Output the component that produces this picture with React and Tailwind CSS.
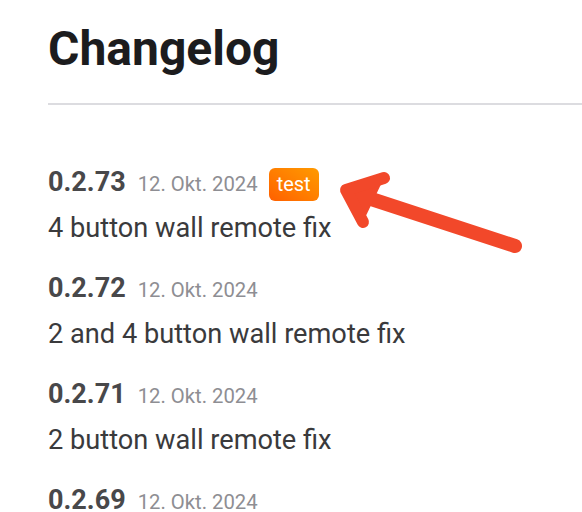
import React from 'react'

const ENTRIES = [
  { version: '0.2.73', date: '12. Okt. 2024', tag: 'test', text: '4 button wall remote fix' },
  { version: '0.2.72', date: '12. Okt. 2024', text: '2 and 4 button wall remote fix' },
  { version: '0.2.71', date: '12. Okt. 2024', text: '2 button wall remote fix' },
  { version: '0.2.69', date: '12. Okt. 2024' },
]

const Arrow = () => (
  <svg
    className="absolute left-0 top-0 pointer-events-none"
    width="582"
    height="512"
    viewBox="0 0 582 512"
  >
    <path
      d="M515 246 L356 194"
      stroke="#f2482a"
      strokeWidth="14"
      strokeLinecap="round"
      fill="none"
    />
    <path
      d="M384 178 L346 190 L363 222"
      stroke="#f2482a"
      strokeWidth="12"
      strokeLinecap="round"
      strokeLinejoin="round"
      fill="#f2482a"
    />
  </svg>
)

const App = () => {
  return (
    <div className="relative w-[582px] h-[512px] overflow-hidden bg-white font-['Roboto',sans-serif]">
      <div className="pl-12 pt-[21px]">
        <h1 className="text-[48px] leading-[56px] font-bold text-[#1c1c1e]">Changelog</h1>
        <div className="mt-[26px] h-[2px] bg-[#dcdce0]" />

        <div className="mt-[61px] flex flex-col gap-[28px]">
          {ENTRIES.map((entry) => (
            <div key={entry.version} className="flex flex-col gap-[14px]">
              <div className="flex items-center h-[32px]">
                <span className="text-[27px] leading-[32px] font-bold text-[#48484a]">
                  {entry.version}
                </span>
                <span className="ml-[12px] text-[20.3px] leading-[32px] text-[#8e8e93] pt-[3px]">
                  {entry.date}
                </span>
                {entry.tag && (
                  <span className="ml-[11px] mt-[4px] h-[33px] w-[50px] flex items-center justify-center rounded-[6px] bg-gradient-to-tr from-[#ff5f00] to-[#ff9a00] text-white text-[20px]">
                    {entry.tag}
                  </span>
                )}
              </div>
              {entry.text && (
                <p className="text-[27.2px] leading-[32px] text-[#3a3a3c]">{entry.text}</p>
              )}
            </div>
          ))}
        </div>
      </div>
      <Arrow />
    </div>
  )
}

export default App
